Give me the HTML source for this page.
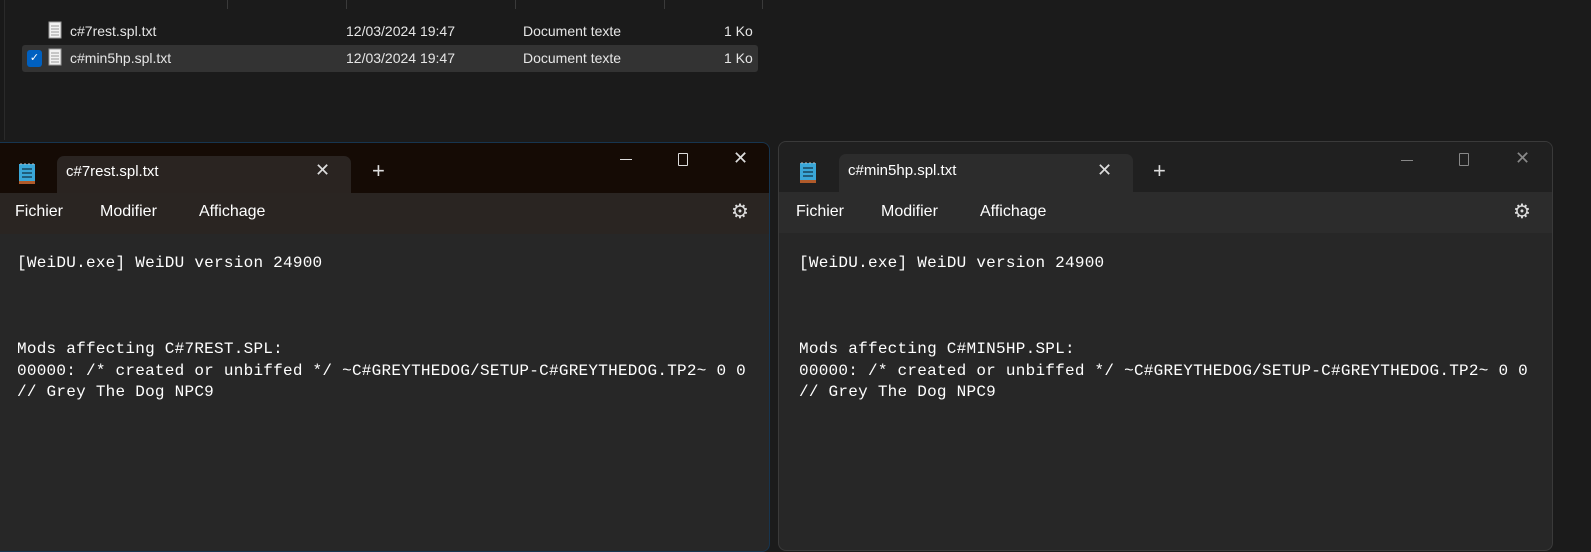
<!DOCTYPE html>
<html><head><meta charset="utf-8"><style>
*{margin:0;padding:0;box-sizing:border-box}
body{width:1591px;height:544px;background:#1b1b1b;position:relative;overflow:hidden;font-family:"Segoe UI","Liberation Sans",sans-serif;color:#fff}
.a{position:absolute;white-space:nowrap}
.ex{font-size:14px;color:#e6e6e6}
.mono{font-family:"Liberation Mono",monospace;font-size:16px;letter-spacing:0.25px;color:#fff;line-height:21.7px;white-space:pre}
.menu{font-size:16px;color:#fff}
</style></head><body>
<!-- explorer -->
<div class="a" style="left:0;top:0;width:5px;height:140px;background:#191919;border-right:1px solid #2a2a2a"></div>
<div class="a" style="left:227px;top:0;width:1px;height:9px;background:#3a3a3a"></div>
<div class="a" style="left:346px;top:0;width:1px;height:9px;background:#3a3a3a"></div>
<div class="a" style="left:515px;top:0;width:1px;height:9px;background:#3a3a3a"></div>
<div class="a" style="left:664px;top:0;width:1px;height:9px;background:#3a3a3a"></div>
<div class="a" style="left:762px;top:0;width:1px;height:9px;background:#3a3a3a"></div>
<div class="a" style="left:22px;top:45px;width:736px;height:27px;background:#333;border-radius:3px"></div>
<div class="a" style="left:27px;top:50px;width:15px;height:17px;background:#0060c0;border-radius:3px;color:#fff;font-size:11px;text-align:center;line-height:17px">✓</div>
<svg class="a" style="left:48px;top:21px" width="14" height="18"><rect x="1" y="1" width="12" height="16" fill="#f2f2f2" stroke="#999"/><path d="M3 5h8M3 8h8M3 11h8M3 14h8" stroke="#999"/></svg>
<svg class="a" style="left:48px;top:48px" width="14" height="18"><rect x="1" y="1" width="12" height="16" fill="#f2f2f2" stroke="#999"/><path d="M3 5h8M3 8h8M3 11h8M3 14h8" stroke="#999"/></svg>
<div class="a ex" style="left:70px;top:23px">c#7rest.spl.txt</div>
<div class="a ex" style="left:346px;top:23px">12/03/2024 19:47</div>
<div class="a ex" style="left:523px;top:23px">Document texte</div>
<div class="a ex" style="left:724px;top:23px">1 Ko</div>
<div class="a ex" style="left:70px;top:50px">c#min5hp.spl.txt</div>
<div class="a ex" style="left:346px;top:50px">12/03/2024 19:47</div>
<div class="a ex" style="left:523px;top:50px">Document texte</div>
<div class="a ex" style="left:724px;top:50px">1 Ko</div>

<!-- left notepad -->
<div class="a" style="left:-10px;top:142px;width:780px;height:410px;background:#272727;border:1px solid #17354f;border-radius:8px;overflow:hidden">
 <div class="a" style="left:0;top:0;width:780px;height:50px;background:#150b05"></div>
 <div class="a" style="left:66px;top:13px;width:294px;height:38px;background:#2a2421;border-radius:7px 7px 0 0"></div>
 <div class="a" style="left:0;top:50px;width:780px;height:41px;background:#2a2522"></div>
</div>
<svg class="a" style="left:17px;top:162px" width="20" height="24"><rect x="2" y="2" width="16" height="18" fill="#3aa7d8"/><rect x="2" y="19" width="16" height="3" fill="#b05a2a"/><path d="M5 7h10M5 11h10M5 15h10" stroke="#134" stroke-width="1.3"/><path d="M4 1v2M8 1v2M12 1v2M16 1v2" stroke="#bbb"/></svg>
<div class="a" style="left:66px;top:163px;font-size:15px">c#7rest.spl.txt</div>
<div class="a" style="left:315px;top:160px;font-size:18px;color:#ddd">✕</div>
<div class="a" style="left:372px;top:158px;font-size:22px;color:#ddd">+</div>
<div class="a" style="left:620px;top:159px;width:12px;height:1px;background:#ddd"></div>
<div class="a" style="left:678px;top:153px;width:10px;height:13px;border:1px solid #ddd;border-radius:1px"></div>
<div class="a" style="left:733px;top:148px;font-size:18px;color:#ddd">✕</div>
<div class="a menu" style="left:15px;top:203px">Fichier</div>
<div class="a menu" style="left:100px;top:203px">Modifier</div>
<div class="a menu" style="left:199px;top:203px">Affichage</div>
<div class="a" style="left:731px;top:199px;font-size:20px;color:#ddd">⚙</div>
<div class="a mono" style="left:17px;top:253px">[WeiDU.exe] WeiDU version 24900</div>
<div class="a mono" style="left:17px;top:339px">Mods affecting C#7REST.SPL:
00000: /* created or unbiffed */ ~C#GREYTHEDOG/SETUP-C#GREYTHEDOG.TP2~ 0 0
// Grey The Dog NPC9</div>

<!-- right notepad -->
<div class="a" style="left:778px;top:141px;width:775px;height:410px;background:#272727;border:1px solid #3a3a3a;border-radius:8px;overflow:hidden">
 <div class="a" style="left:0;top:0;width:775px;height:50px;background:#202020"></div>
 <div class="a" style="left:60px;top:12px;width:294px;height:38px;background:#2c2c2c;border-radius:7px 7px 0 0"></div>
 <div class="a" style="left:0;top:50px;width:775px;height:41px;background:#2c2c2c"></div>
</div>
<svg class="a" style="left:798px;top:161px" width="20" height="24"><rect x="2" y="2" width="16" height="18" fill="#3aa7d8"/><rect x="2" y="19" width="16" height="3" fill="#b05a2a"/><path d="M5 7h10M5 11h10M5 15h10" stroke="#134" stroke-width="1.3"/><path d="M4 1v2M8 1v2M12 1v2M16 1v2" stroke="#bbb"/></svg>
<div class="a" style="left:848px;top:162px;font-size:15px">c#min5hp.spl.txt</div>
<div class="a" style="left:1097px;top:160px;font-size:18px;color:#ddd">✕</div>
<div class="a" style="left:1153px;top:158px;font-size:22px;color:#ddd">+</div>
<div class="a" style="left:1401px;top:160px;width:12px;height:1px;background:#888"></div>
<div class="a" style="left:1459px;top:153px;width:10px;height:13px;border:1px solid #888;border-radius:1px"></div>
<div class="a" style="left:1515px;top:148px;font-size:18px;color:#888">✕</div>
<div class="a menu" style="left:796px;top:203px">Fichier</div>
<div class="a menu" style="left:881px;top:203px">Modifier</div>
<div class="a menu" style="left:980px;top:203px">Affichage</div>
<div class="a" style="left:1513px;top:199px;font-size:20px;color:#ddd">⚙</div>
<div class="a mono" style="left:799px;top:253px">[WeiDU.exe] WeiDU version 24900</div>
<div class="a mono" style="left:799px;top:339px">Mods affecting C#MIN5HP.SPL:
00000: /* created or unbiffed */ ~C#GREYTHEDOG/SETUP-C#GREYTHEDOG.TP2~ 0 0
// Grey The Dog NPC9</div>
</body></html>
